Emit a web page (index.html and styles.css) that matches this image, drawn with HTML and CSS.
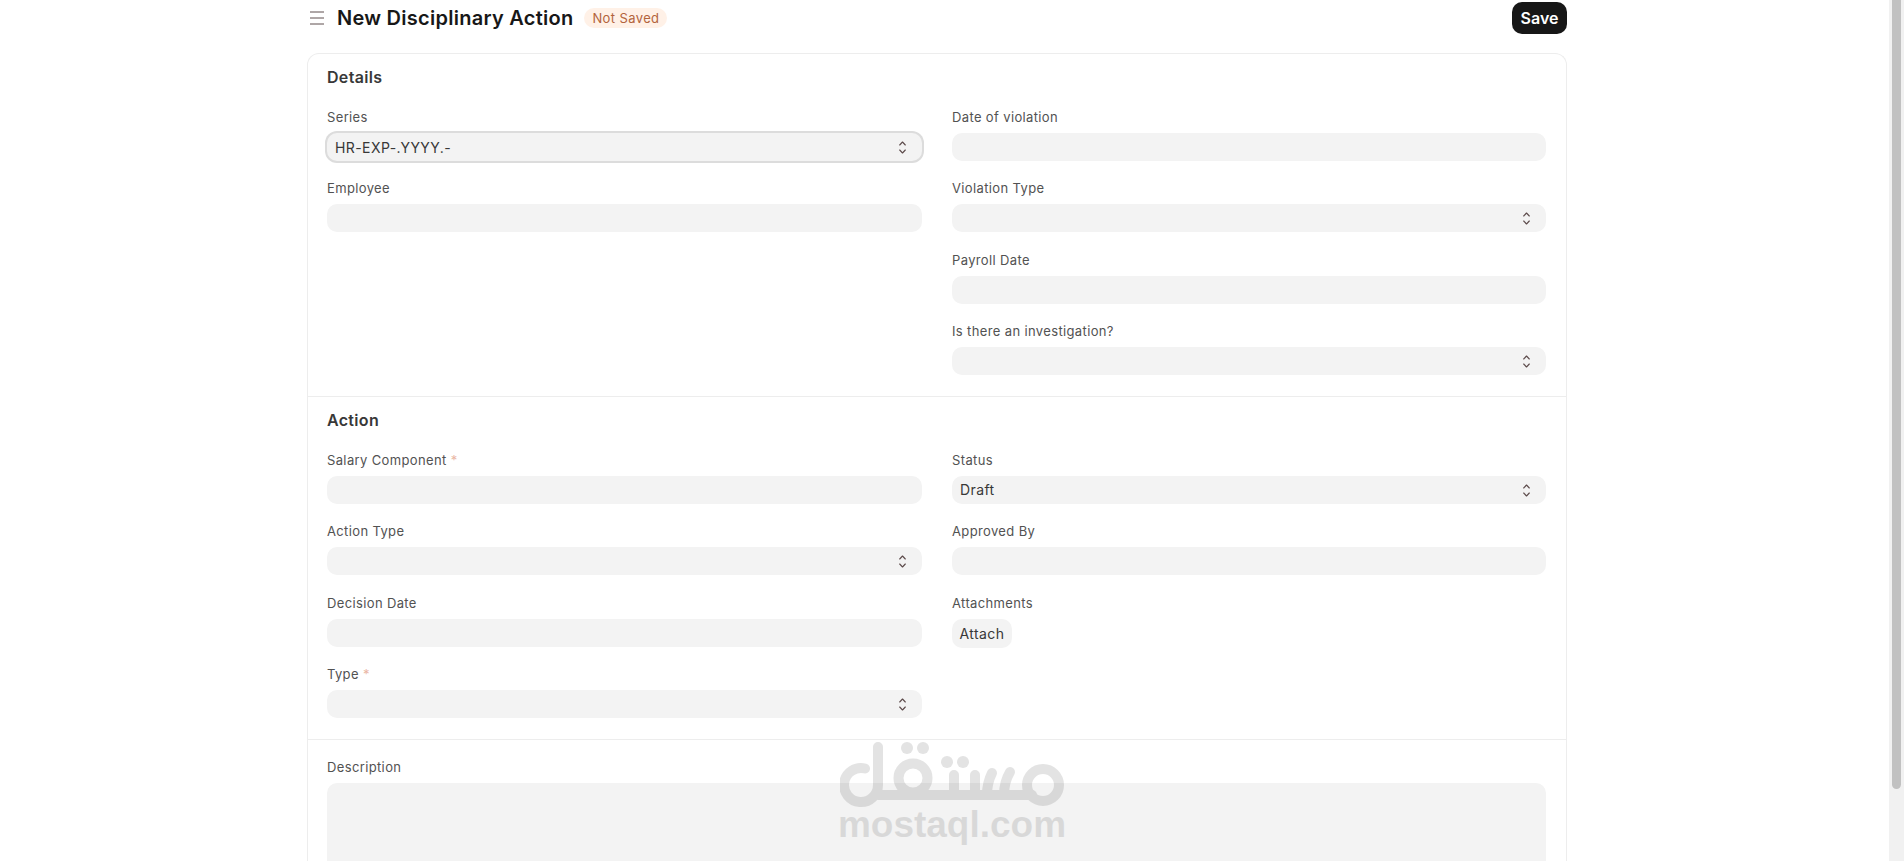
FILE: index.html
```html
<!DOCTYPE html>
<html lang="en">
<head>
<meta charset="utf-8">
<title>New Disciplinary Action</title>
<link rel="stylesheet" href="styles.css">
</head>
<body>
<svg class="sprite" aria-hidden="true">
  <symbol id="updown" viewBox="0 0 7 13">
    <path d="M.7 4 3.5 1 6.3 4M.7 9 3.5 12 6.3 9" fill="none" stroke="currentColor" stroke-width="1.1" stroke-linecap="round" stroke-linejoin="round"/>
  </symbol>
</svg>
<div class="app">
  <main class="main">
    <div class="page">
      <header class="page-head">
        <div class="title-wrap">
          <svg class="menu-icon" viewBox="0 0 14 14" aria-hidden="true"><path d="M0 1h14M0 7h14M0 13h14" fill="none" stroke="currentColor" stroke-width="1"/></svg>
          <h1 class="title">New Disciplinary Action</h1>
          <span class="badge">Not Saved</span>
        </div>
        <button class="btn-save" type="button">Save</button>
      </header>

      <div class="card">
        <section class="section">
          <h2 class="section-title">Details</h2>
          <div class="cols">
            <div class="col">
              <div class="field"><label class="label">Series</label>
                <div class="input select focused"><span>HR-EXP-.YYYY.-</span><svg class="chev"><use href="#updown"/></svg></div></div>
              <div class="field"><label class="label">Employee</label><div class="input"></div></div>
            </div>
            <div class="col">
              <div class="field"><label class="label">Date of violation</label><div class="input"></div></div>
              <div class="field"><label class="label">Violation Type</label><div class="input select"><svg class="chev"><use href="#updown"/></svg></div></div>
              <div class="field"><label class="label">Payroll Date</label><div class="input"></div></div>
              <div class="field"><label class="label">Is there an investigation?</label><div class="input select"><svg class="chev"><use href="#updown"/></svg></div></div>
            </div>
          </div>
        </section>

        <section class="section">
          <h2 class="section-title">Action</h2>
          <div class="cols">
            <div class="col">
              <div class="field"><label class="label">Salary Component <span class="req">*</span></label><div class="input"></div></div>
              <div class="field"><label class="label">Action Type</label><div class="input select"><svg class="chev"><use href="#updown"/></svg></div></div>
              <div class="field"><label class="label">Decision Date</label><div class="input"></div></div>
              <div class="field"><label class="label">Type <span class="req">*</span></label><div class="input select"><svg class="chev"><use href="#updown"/></svg></div></div>
            </div>
            <div class="col">
              <div class="field"><label class="label">Status</label><div class="input select"><span>Draft</span><svg class="chev"><use href="#updown"/></svg></div></div>
              <div class="field"><label class="label">Approved By</label><div class="input"></div></div>
              <div class="field"><label class="label">Attachments</label><button class="btn-attach" type="button">Attach</button></div>
            </div>
          </div>
        </section>

        <section class="section section-plain">
          <div class="field"><label class="label">Description</label><div class="textarea"></div></div>
        </section>
      </div>
    </div>

    <div class="watermark" aria-hidden="true">
      <svg class="wm-logo" viewBox="0 0 224 66">
        <g fill="none" stroke="currentColor" stroke-width="10" stroke-linecap="round" stroke-linejoin="round">
          <path d="M38 5V43A17 17 0 1 1 25 26.500"/>
          <path d="M38 53H192"/>
          <circle cx="73" cy="36" r="14.500"/>
          <path d="M114 33V53M135 33V53M152 31Q147 41 147 53M170 30Q164 40 164 53"/>
          <circle cx="203" cy="43" r="16"/>
        </g>
        <g fill="currentColor">
          <circle cx="67" cy="6" r="6"/><circle cx="83" cy="6" r="6"/>
          <circle cx="107" cy="20" r="6"/><circle cx="123" cy="20" r="6"/>
        </g>
      </svg>
      <div class="wm-text">mostaql.com</div>
    </div>
  </main>
  <aside class="scrollbar" aria-hidden="true"><div class="scroll-thumb"></div></aside>
</div>
</body>
</html>
```
FILE: styles.css
```css
* { box-sizing: border-box; }
html, body { margin: 0; height: 861px; overflow: hidden; background: #fff; }
body { font-family: Inter, "Liberation Sans", sans-serif; color: #171717; }
.sprite { display: none; }
.app { display: flex; height: 861px; overflow: hidden; }
.main { flex: 1; position: relative; overflow: hidden; }
.page { width: 1260px; margin-left: 307px; }

.page-head { display: flex; justify-content: space-between; align-items: center; height: 36px; margin-bottom: 17px; }
.title-wrap { display: flex; align-items: center; }
.menu-icon { width: 14px; height: 14px; margin-left: 3px; color: #5f4e4e; }
.title { margin: 0 0 0 13px; font-size: 20px; font-weight: 600; line-height: 28px; letter-spacing: .26px; color: #171717; }
.badge { margin-left: 11px; height: 20px; padding: 0 8px; border-radius: 10px; background: #fff1e7; color: #b3643c; font-size: 13px; line-height: 20px; font-weight: 400; letter-spacing: .03em; }
.btn-save { width: 55px; height: 32px; border: 0; border-radius: 10px; background: #171717; color: #fff; font: 600 16px/32px Inter, sans-serif; padding: 0; }

.card { border: 1px solid #ededed; border-bottom: 0; border-radius: 12px 12px 0 0; }
.section { padding: 13px 20px 1.4px 19px; border-bottom: 1px solid #ededed; }
.section-plain { padding-top: 19px; border-bottom: 0; }
.section-title { margin: 0 0 22px; font-size: 16px; line-height: 20px; font-weight: 600; color: #383838; letter-spacing: .02em; }
.cols { display: grid; grid-template-columns: 595px 594px; column-gap: 30px; }
.col { display: flex; flex-direction: column; }
.field { height: 71.4px; }
.section-plain .field { height: auto; }
.label { display: block; height: 16px; margin-bottom: 8px; font-size: 13px; line-height: 16px; color: #525252; letter-spacing: .028em; }
.req { color: #eab6a4; }
.input { display: flex; align-items: center; justify-content: space-between; height: 28px; padding: 0 8px; border-radius: 10px; background: #f3f3f3; font-size: 14px; color: #383838; letter-spacing: .03em; }
.focused { box-shadow: 0 0 0 2px #dcdcdc; }
.select { position: relative; }
.chev { position: absolute; right: 16px; top: 8px; width: 7px; height: 13px; color: #5c4a4a; }
.btn-attach { display: block; width: 60px; height: 29px; border: 0; border-radius: 10px; background: #f3f3f3; font: 400 14px/29px Inter, sans-serif; color: #383838; padding: 0; letter-spacing: .03em; }
.textarea { height: 300px; border-radius: 10px; background: #f3f3f3; }

.watermark { position: absolute; left: 840px; top: 742px; width: 224px; color: #000; opacity: .105; display: flex; flex-direction: column; align-items: center; pointer-events: none; }
.wm-logo { width: 224px; height: 66px; display: block; }
.wm-text { margin-top: -1px; font: 700 37px/36px "Liberation Sans", Arial, sans-serif; white-space: nowrap; }

.scrollbar { flex: 0 0 15px; background: #f1f1f1; padding: 0 3px; height: 861px; }
.scroll-thumb { height: 789px; background: #c1c1c1; border-radius: 0 0 5px 5px; }
```
